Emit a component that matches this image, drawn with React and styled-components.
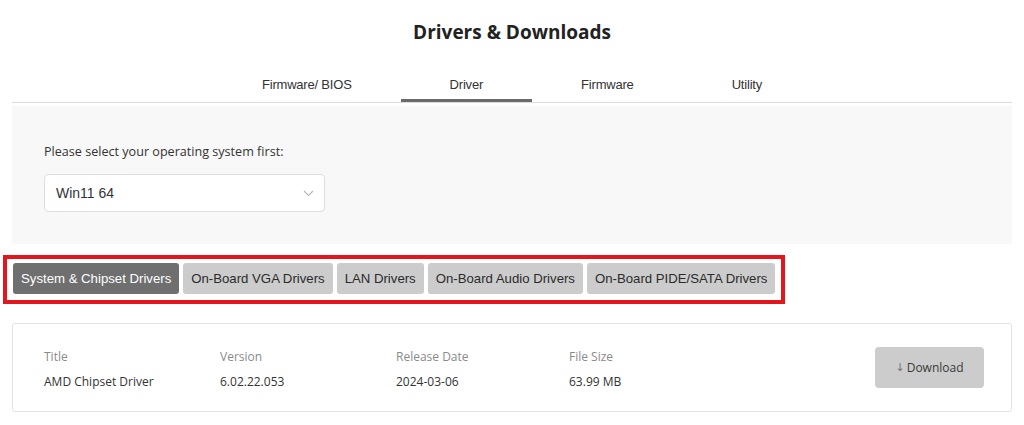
import React, { useState } from 'react';
import styled, { createGlobalStyle } from 'styled-components';

const GlobalStyle = createGlobalStyle`
  html, body {
    margin: 0;
    padding: 0;
    background: #ffffff;
  }
  body {
    font-family: "Open Sans", "Liberation Sans", Arial, sans-serif;
    color: #333333;
  }
`;

const tabs = ['Firmware/ BIOS', 'Driver', 'Firmware', 'Utility'];

const categories = [
  'System & Chipset Drivers',
  'On-Board VGA Drivers',
  'LAN Drivers',
  'On-Board Audio Drivers',
  'On-Board PIDE/SATA Drivers',
];

const drivers = [
  {
    title: 'AMD Chipset Driver',
    version: '6.02.22.053',
    date: '2024-03-06',
    size: '63.99 MB',
  },
];

export default function App() {
  const [activeTab, setActiveTab] = useState(1);
  const [activeCat, setActiveCat] = useState(0);

  return (
    <>
      <GlobalStyle />
      <Page>
        <Title>Drivers &amp; Downloads</Title>
        <TabBar>
          {tabs.map((t, i) => (
            <Tab key={t} $active={i === activeTab} onClick={() => setActiveTab(i)}>
              {t}
            </Tab>
          ))}
        </TabBar>
        <Divider />
        <OsPanel>
          <OsLabel>Please select your operating system first:</OsLabel>
          <Select>
            <span>Win11 64</span>
            <svg width="11" height="7" viewBox="0 0 11 7">
              <polyline points="1,1 5.5,5.5 10,1" fill="none" stroke="#b8b8b8" strokeWidth="1.1" />
            </svg>
          </Select>
        </OsPanel>
        <Highlight>
          {categories.map((c, i) => (
            <CategoryButton key={c} $active={i === activeCat} onClick={() => setActiveCat(i)}>
              {c}
            </CategoryButton>
          ))}
        </Highlight>
        {drivers.map((d) => (
          <DriverCard key={d.title}>
            <Field>
              <FieldLabel>Title</FieldLabel>
              <FieldValue>{d.title}</FieldValue>
            </Field>
            <Field>
              <FieldLabel>Version</FieldLabel>
              <FieldValue>{d.version}</FieldValue>
            </Field>
            <Field>
              <FieldLabel>Release Date</FieldLabel>
              <FieldValue>{d.date}</FieldValue>
            </Field>
            <Field>
              <FieldLabel>File Size</FieldLabel>
              <FieldValue>{d.size}</FieldValue>
            </Field>
            <DownloadButton>
              <Arrow>↓</Arrow>Download
            </DownloadButton>
          </DriverCard>
        ))}
      </Page>
    </>
  );
}

const Page = styled.div`
  width: 1000px;
  padding: 19px 12px 0 12px;
  display: flex;
  flex-direction: column;
`;

const Title = styled.h1`
  margin: 0;
  font-family: "Open Sans", sans-serif;
  font-weight: 700;
  font-size: 19px;
  line-height: 26px;
  text-align: center;
  color: #222222;
`;

const TabBar = styled.div`
  margin-top: 25px;
  display: flex;
  justify-content: center;
`;

const Tab = styled.div`
  padding: 0 49px;
  height: 29px;
  line-height: 29px;
  font-family: "Liberation Sans", Arial, sans-serif;
  font-size: 13px;
  letter-spacing: -0.2px;
  color: #333333;
  cursor: pointer;
  border-bottom: 3px solid ${(p) => (p.$active ? '#6b6b6b' : 'transparent')};
`;

const Divider = styled.div`
  height: 1px;
  background: #dcdcdc;
`;

const OsPanel = styled.div`
  margin-top: 3px;
  background: #f8f8f8;
  padding: 36px 32px 32px 32px;
  display: flex;
  flex-direction: column;
  align-items: flex-start;
`;

const OsLabel = styled.div`
  font-size: 12.6px;
  line-height: 20px;
  color: #333333;
`;

const Select = styled.div`
  margin-top: 12px;
  box-sizing: border-box;
  width: 281px;
  height: 38px;
  background: #ffffff;
  border: 1px solid #dedede;
  border-radius: 4px;
  padding: 0 10px 0 11px;
  display: flex;
  align-items: center;
  justify-content: space-between;
  font-family: "Liberation Sans", Arial, sans-serif;
  font-size: 14px;
  color: #333333;
`;

const Highlight = styled.div`
  margin: 11px 0 0 -9px;
  align-self: flex-start;
  display: flex;
  gap: 4px;
  padding: 4px 6px 6px 6px;
  border: 4px solid #e3161d;
`;

const CategoryButton = styled.button`
  height: 31px;
  padding: 0 8px;
  border: none;
  border-radius: 3px;
  font-family: "Liberation Sans", Arial, sans-serif;
  font-size: 13.2px;
  cursor: pointer;
  background: ${(p) => (p.$active ? '#6f6f6f' : '#cccccc')};
  color: ${(p) => (p.$active ? '#ffffff' : '#2b2b2b')};
`;

const DriverCard = styled.div`
  margin-top: 19px;
  box-sizing: border-box;
  height: 89px;
  border: 1px solid #e2e2e2;
  border-radius: 3px;
  padding: 0 27px 0 31px;
  display: flex;
  align-items: center;
`;

const Field = styled.div`
  width: 176px;
  padding-top: 4px;
  display: flex;
  flex-direction: column;
  gap: 5px;
  &:nth-child(3) {
    width: 173px;
  }
`;

const FieldLabel = styled.div`
  font-size: 12px;
  line-height: 20px;
  color: #8a8a8a;
`;

const FieldValue = styled.div`
  font-size: 12px;
  line-height: 20px;
  color: #333333;
`;

const DownloadButton = styled.button`
  margin-left: auto;
  width: 109px;
  height: 41px;
  border: none;
  border-radius: 4px;
  background: #cccccc;
  color: #3a3a3a;
  font-family: "Open Sans", sans-serif;
  font-size: 12px;
  display: flex;
  align-items: center;
  justify-content: center;
  gap: 2px;
`;

const Arrow = styled.span`
  font-size: 11px;
  color: #777777;
  font-family: "DejaVu Sans", sans-serif;
`;
